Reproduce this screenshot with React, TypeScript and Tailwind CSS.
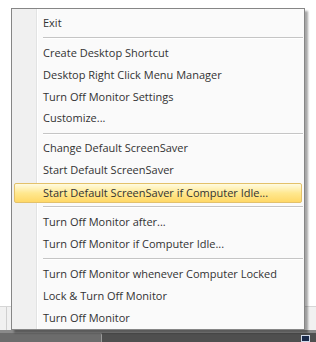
import React from "react";

type Entry = { label: string; active?: boolean } | "sep";

const entries: Entry[] = [
  { label: "Exit" },
  "sep",
  { label: "Create Desktop Shortcut" },
  { label: "Desktop Right Click Menu Manager" },
  { label: "Turn Off Monitor Settings" },
  { label: "Customize..." },
  "sep",
  { label: "Change Default ScreenSaver" },
  { label: "Start Default ScreenSaver" },
  { label: "Start Default ScreenSaver if Computer Idle...", active: true },
  "sep",
  { label: "Turn Off Monitor after..." },
  { label: "Turn Off Monitor if Computer Idle..." },
  "sep",
  { label: "Turn Off Monitor whenever Computer Locked" },
  { label: "Lock & Turn Off Monitor" },
  { label: "Turn Off Monitor" },
];

const MenuItem = ({ label, active }: { label: string; active?: boolean }) =>
  active ? (
    <div className="h-[22px] mx-[2px] pt-[1px] flex">
      <div className="flex-1 flex items-center pl-[28px] rounded-[2px] border border-[#e3c16a] bg-gradient-to-b from-[#fffbe0] via-[#ffe88f] to-[#ffd866]">
        <span className="text-[11px] text-[#333333] whitespace-nowrap">{label}</span>
      </div>
    </div>
  ) : (
    <div className="h-[22px] flex items-center pl-[31px]">
      <span className="text-[11px] text-[#333333] whitespace-nowrap">{label}</span>
    </div>
  );

const Separator = () => (
  <div className="h-[8px] flex items-center pl-[31px] pr-[1px]">
    <div className="w-full h-[2px] border-t border-[#c5c5c5] border-b border-b-white" />
  </div>
);

export default function App() {
  return (
    <div
      className="relative w-[316px] h-[342px] bg-white overflow-hidden flex flex-col"
      style={{ fontFamily: "'Open Sans', 'Noto Sans', sans-serif" }}
    >
      {/* desktop behind the menu */}
      <div className="flex-1" />
      <div className="h-[24px] bg-[#f1f1f1] border-t border-[#d6d6d6] flex">
        <div className="w-[7px] border-r border-[#d0d0d0]" />
      </div>
      <div className="h-[3px] bg-[#8a8a8a]" />
      <div className="h-[9px] bg-[#4f4f4f] flex">
        <div className="w-[102px] bg-[#6c6c6c] border-r border-[#9a9a9a] rounded-tr-[2px]" />
        <div className="ml-auto mr-[6px] mt-[2px] w-[9px] h-[7px] bg-[#1a2a4a] border border-[#cfd8e8]" />
      </div>

      {/* context menu, floating over the desktop */}
      <div className="absolute left-[11px] top-[8px] w-[294px] h-[322px] shadow-[3px_3px_2px_rgba(0,0,0,0.35)]">
        <div className="w-full h-full border border-[#868686] pt-[3px] flex flex-col bg-[linear-gradient(to_right,#f0f0f0_24px,#e2e3e3_24px,#e2e3e3_25px,#ffffff_25px,#ffffff_26px,#fafafa_26px)]">
          {entries.map((e, i) =>
            e === "sep" ? (
              <Separator key={i} />
            ) : (
              <MenuItem key={i} label={e.label} active={e.active} />
            )
          )}
        </div>
      </div>
    </div>
  );
}
